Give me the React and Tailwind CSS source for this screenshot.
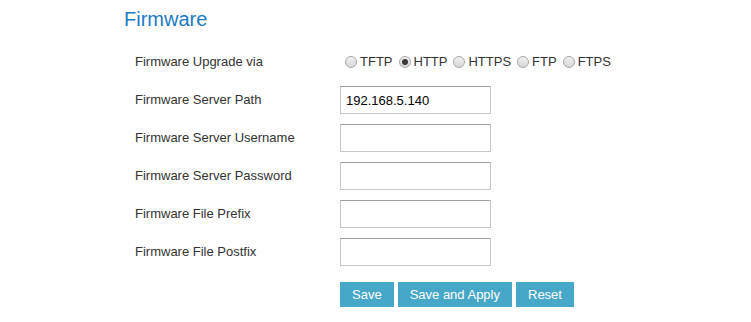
import { useState } from 'react';

const protocols = ['TFTP', 'HTTP', 'HTTPS', 'FTP', 'FTPS'];

const fields = [
  { label: 'Firmware Server Path', value: '192.168.5.140' },
  { label: 'Firmware Server Username', value: '' },
  { label: 'Firmware Server Password', value: '', type: 'password' },
  { label: 'Firmware File Prefix', value: '' },
  { label: 'Firmware File Postfix', value: '' },
];

function Radio({ checked, onClick }) {
  return (
    <span
      onClick={onClick}
      className="inline-flex w-[12px] h-[12px] rounded-full border border-[#a8a8a8] bg-gradient-to-b from-[#f2f2f2] to-[#d6d6d6] items-center justify-center mx-[3px] cursor-pointer"
    >
      {checked && <span className="w-[6px] h-[6px] rounded-full bg-[#3a3a3a]" />}
    </span>
  );
}

function App() {
  const [proto, setProto] = useState('HTTP');

  return (
    <div className="w-[751px] h-[322px] bg-white font-['Liberation_Sans',Arial,sans-serif] overflow-hidden">
      <div className="pl-[124px] pt-[7px]">
        <h2 className="text-[20px] leading-[24px] text-[#1b7bc4]">Firmware</h2>
      </div>

      <div className="pl-[135px] mt-[17px] flex flex-col gap-[10px]">
        <div className="flex items-center h-[28px]">
          <div className="w-[205px] text-[13px] text-[#333]">Firmware Upgrade via</div>
          <div className="flex items-center text-[13px] text-[#333] pl-[2px]">
            {protocols.map((p) => (
              <label key={p} className="flex items-center mr-[1px]">
                <Radio checked={proto === p} onClick={() => setProto(p)} />
                <span className="mr-[2px]">{p}</span>
              </label>
            ))}
          </div>
        </div>

        {fields.map((f) => (
          <div key={f.label} className="flex items-center h-[28px]">
            <div className="w-[205px] text-[13px] text-[#333]">{f.label}</div>
            <input
              type={f.type || 'text'}
              defaultValue={f.value}
              className="w-[151px] h-[28px] border border-[#c6c6c6] border-t-[#a0a0a0] pl-[5px] text-[13px] text-black outline-none"
            />
          </div>
        ))}

        <div className="flex gap-[4px] mt-[6px] pl-[205px]">
          <button className="h-[25px] px-[12px] bg-[#47a7c9] text-white text-[13px]">Save</button>
          <button className="h-[25px] px-[12px] bg-[#47a7c9] text-white text-[13px]">Save and Apply</button>
          <button className="h-[25px] px-[12px] bg-[#47a7c9] text-white text-[13px]">Reset</button>
        </div>
      </div>
    </div>
  );
}

export default App;
